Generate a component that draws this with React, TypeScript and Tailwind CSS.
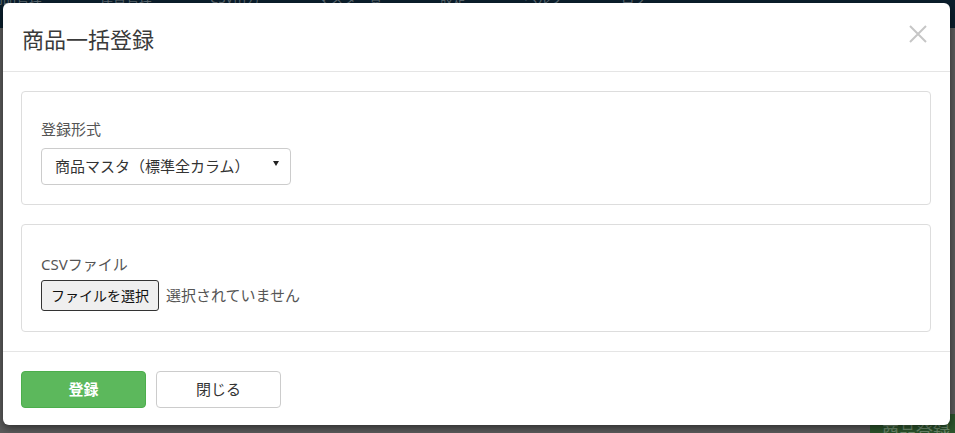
import React from "react"

const navItems = ["商品管理", "運賃管理", "CSV出力", "マスタ一覧", "設定", "ヘルプ", "ログ"]

export default function App() {
  return (
    <div
      className="relative w-[955px] h-[433px] overflow-hidden bg-[#5c5c5c]"
      style={{ fontFamily: '"Noto Sans", "Noto Sans CJK JP", sans-serif' }}
    >
      {/* 背景のナビバー（オーバーレイ越し） */}
      <div className="h-[28px] bg-[#0b1f2d] flex gap-[58px] overflow-hidden">
        {navItems.map((item) => (
          <span key={item} className="text-[13px] leading-[14px] -mt-[9px] text-[#5d6a72] first:-ml-[10px]">
            {item}
          </span>
        ))}
      </div>

      {/* 背景の登録ボタン */}
      <div className="absolute left-[870px] top-[414px] w-[100px] h-[30px] bg-[#2c552c] text-[#6f8d6f] text-[17px] pl-[12px] leading-[24px] pt-[6px]">
        商品登録
      </div>

      {/* モーダル */}
      <div className="absolute left-[3px] top-[3px] w-[947px] h-[422px] bg-white rounded-[6px] shadow-[0_3px_9px_rgba(0,0,0,0.5)] flex flex-col">
        {/* ヘッダー */}
        <div className="flex items-center justify-between pl-[19px] pr-[22px] pt-[20px] pb-[16px] border-b border-[#e5e5e5]">
          <h4 className="text-[22px] leading-[32px] text-[#3a3a3a]">商品一括登録</h4>
          <button className="w-[20px] h-[20px] flex items-center justify-center -mt-[11px]">
            <svg width="18" height="18" viewBox="0 0 18 18">
              <path d="M1 1 L17 17 M17 1 L1 17" stroke="#c6c6c6" strokeWidth="2" />
            </svg>
          </button>
        </div>

        {/* 本文 */}
        <div className="pl-[18px] pr-[19px] pt-[19px] pb-[19px] border-b border-[#e5e5e5]">
          <div className="border border-[#dddddd] rounded-[4px] px-[19px] pt-[27px] pb-[19px] mb-[19px]">
            <label className="block text-[15px] leading-[20px] text-[#555] mb-[9px]">登録形式</label>
            <div className="relative w-[250px] h-[37px] border border-[#cccccc] rounded-[4px] flex items-center pl-[13px]">
              <span className="text-[15px] text-[#333]">商品マスタ（標準全カラム）</span>
              <svg className="absolute right-[11px] top-[12px]" width="6" height="5" viewBox="0 0 6 5">
                <path d="M0 0 L6 0 L3 5 Z" fill="#222" />
              </svg>
            </div>
          </div>

          <div className="border border-[#dddddd] rounded-[4px] px-[19px] pt-[29px] pb-[20px]">
            <label className="block text-[15px] leading-[20px] text-[#555] mb-[6px]">CSVファイル</label>
            <div className="flex items-center">
              <button className="h-[31px] w-[118px] bg-[#efefef] border border-[#333] rounded-[3px] text-[14px] text-[#111]">
                ファイルを選択
              </button>
              <span className="ml-[7px] text-[15px] text-[#555]">選択されていません</span>
            </div>
          </div>
        </div>

        {/* フッター */}
        <div className="flex gap-[10px] pl-[18px] pt-[19px]">
          <button className="w-[125px] h-[37px] bg-[#5cb85c] border border-[#4cae4c] rounded-[4px] text-white text-[15px] font-bold">
            登録
          </button>
          <button className="w-[125px] h-[37px] bg-white border border-[#cccccc] rounded-[4px] text-[#333] text-[15px]">
            閉じる
          </button>
        </div>
      </div>
    </div>
  )
}
